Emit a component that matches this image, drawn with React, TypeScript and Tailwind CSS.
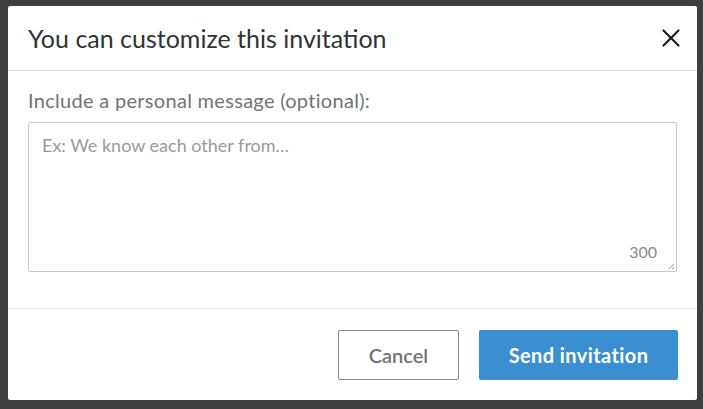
import { X } from 'lucide-react';

export default function App() {
  return (
    <div className="w-[703px] h-[409px] bg-[#3f3f41] pt-[6px] pl-[8px] overflow-hidden" style={{ fontFamily: 'Lato, "Open Sans", sans-serif' }}>
      <div className="w-[689px] h-[394px] bg-white rounded-[2px] flex flex-col">
        {/* header */}
        <div className="h-[65px] flex items-center justify-between pl-[20px] pr-[11px] border-b border-[#e3e3e3]">
          <h2 className="text-[25px] text-[#333] leading-none">You can customize this invitation</h2>
          <button className="w-[30px] h-[30px] flex items-center justify-center text-[#1a1a1a]">
            <X size={30} strokeWidth={1.7} />
          </button>
        </div>

        {/* body */}
        <div className="px-[20px] pt-[17px] pb-[36px] border-b border-[#e6e6e6]">
          <label className="block text-[20px] tracking-[0.3px] text-[#737373] leading-[24px] mb-[10px]">
            Include a personal message (optional):
          </label>
          <div className="relative h-[150px] border border-[#c9c9c9] rounded-[2px]">
            <p className="pt-[9px] pl-[13px] text-[18px] text-[#9a9a9a]">Ex: We know each other from…</p>
            <span className="absolute right-[19px] bottom-[7px] text-[16px] text-[#8c8c8c]">300</span>
            <svg className="absolute right-[1px] bottom-[1px]" width="8" height="8" viewBox="0 0 8 8">
              <path d="M7 2L2 7M7 5L5 7" stroke="#9a9a9a" strokeWidth="1" />
            </svg>
          </div>
        </div>

        {/* footer */}
        <div className="flex-1 flex items-start justify-end gap-[20px] pt-[21px] px-[19px]">
          <button className="w-[121px] h-[50px] border border-[#8a8a8a] rounded-[2px] text-[20px] font-semibold text-[#737373]">
            Cancel
          </button>
          <button className="w-[199px] h-[50px] bg-[#3b8fd1] rounded-[2px] text-[20px] tracking-[0.4px] font-bold text-white">
            Send invitation
          </button>
        </div>
      </div>
    </div>
  );
}
